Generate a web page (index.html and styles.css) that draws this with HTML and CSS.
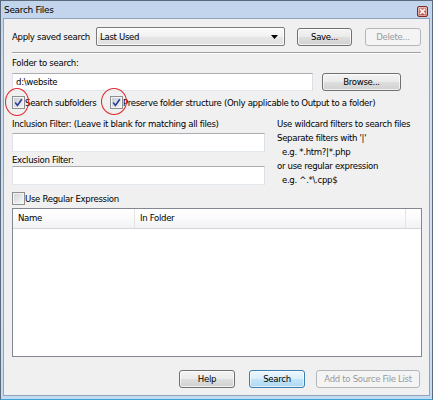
FILE: index.html
```html
<!DOCTYPE html>
<html>
<head>
<meta charset="utf-8">
<title>Search Files</title>
<link rel="stylesheet" href="styles.css">
</head>
<body>
<div class="window">
  <div class="titlebar">
    <span class="title">Search Files</span>
    <span class="close"><svg width="7" height="7" viewBox="0 0 7 7"><path d="M1 1L6 6M6 1L1 6" stroke="#fff" stroke-width="1.6" fill="none"/></svg></span>
  </div>
  <div class="client">
    <div class="row saved">
      <span class="lbl saved-lbl">Apply saved search</span>
      <div class="combo"><span class="combo-text">Last Used</span><svg class="arrow" width="7" height="4" viewBox="0 0 7 4"><path d="M0 0H7L3.5 4Z" fill="#000"/></svg></div>
      <button class="btn save">Save...</button>
      <button class="btn disabled delete">Delete...</button>
    </div>
    <div class="sep"></div>
    <div class="lbl folder-lbl">Folder to search:</div>
    <div class="row folder">
      <div class="input path">d:\website</div>
      <button class="btn browse">Browse...</button>
    </div>
    <div class="checks">
      <label class="check">
        <span class="box"><svg width="11" height="11" viewBox="0 0 11 11"><path d="M2.2 5.6L4.4 8.4L8.8 2.2" stroke="#2c3d92" stroke-width="1.6" fill="none"/></svg><span class="ring ring-a"></span></span>
        <span class="ctext">Search subfolders</span>
      </label>
      <label class="check">
        <span class="box"><svg width="11" height="11" viewBox="0 0 11 11"><path d="M2.2 5.6L4.4 8.4L8.8 2.2" stroke="#2c3d92" stroke-width="1.6" fill="none"/></svg><span class="ring ring-b"></span></span>
        <span class="ctext">Preserve folder structure (Only applicable to Output to a folder)</span>
      </label>
    </div>
    <div class="filters">
      <div class="filter-col">
        <div class="lbl inc-lbl">Inclusion Filter: (Leave it blank for matching all files)</div>
        <div class="input inc"></div>
        <div class="lbl exc-lbl">Exclusion Filter:</div>
        <div class="input exc"></div>
      </div>
      <div class="hints">
        <div>Use wildcard filters to search files</div>
        <div>Separate filters with '|'</div>
        <div class="eg">e.g. *.htm?|*.php</div>
        <div>or use regular expression</div>
        <div class="eg">e.g. ^.*\.cpp$</div>
      </div>
    </div>
    <label class="check regex">
      <span class="box unchecked"></span>
      <span class="ctext">Use Regular Expression</span>
    </label>
    <div class="list">
      <div class="list-head">
        <span class="col col-name">Name</span>
        <span class="col col-folder">In Folder</span>
        <span class="col col-rest"></span>
      </div>
      <div class="list-body"></div>
    </div>
    <div class="actions">
      <button class="btn help">Help</button>
      <button class="btn default search">Search</button>
      <button class="btn disabled add">Add to Source File List</button>
    </div>
  </div>
</div>
</body>
</html>
```

FILE: styles.css
```css
* { box-sizing: border-box; }
html, body { margin: 0; padding: 0; }
body {
  width: 433px;
  height: 400px;
  overflow: hidden;
  font-family: "DejaVu Sans", "Liberation Sans", Arial, sans-serif;
  font-size: 8.6px;
  letter-spacing: -0.33px;
  color: #000;
  background: #fff;
}
.window {
  width: 433px;
  height: 400px;
  display: flex;
  flex-direction: column;
  border: 1px solid #5b6a7d;
  border-bottom-color: #3aa6dc;
  padding: 0 2px 3px 2px;
  background: linear-gradient(#c0d4ec, #cddcf0 60px, #d4e1f2 300px, #c4dbef);
}
.titlebar {
  height: 17px;
  flex: none;
  display: flex;
  align-items: center;
  justify-content: space-between;
  padding-left: 1px;
}
.title { font-size: 9px; line-height: 12px; margin-top: 1px; }
.close {
  width: 11px;
  height: 11px;
  margin-right: 2px;
  margin-top: 3px;
  border: 1px solid #7e2c25;
  border-radius: 2px;
  background: linear-gradient(#d88a82, #c24f44);
  display: flex;
  align-items: center;
  justify-content: center;
  box-shadow: inset 0 0 0 1px rgba(255,255,255,0.45);
}
.client {
  flex: 1;
  display: flex;
  flex-direction: column;
  border: 1px solid #8ea3bd;
  background: #f0f0f0;
  padding: 8px 8px 7px 8px;
  min-height: 0;
}
.lbl { line-height: 12px; white-space: nowrap; }
.row { display: flex; align-items: center; }
.saved { height: 19px; }
.saved-lbl { width: 84px; flex: none; }
.btn {
  font: inherit;
  letter-spacing: inherit;
  color: #000;
  padding: 0;
  margin: 0;
  border: 1px solid #707070;
  border-radius: 3px;
  background: linear-gradient(#f3f3f3 0%, #ebebeb 48%, #dedede 52%, #d0d0d0 100%);
  box-shadow: inset 0 0 0 1px rgba(255,255,255,0.7);
  height: 18px;
  line-height: 16px;
  text-align: center;
  flex: none;
}
.btn.disabled {
  color: #9a9a9a;
  border-color: #b4b7ba;
  background: #f4f4f4;
  box-shadow: none;
}
.btn.default {
  border-color: #3c7fb1;
  background: linear-gradient(#ebf6fd 0%, #dbeffb 48%, #c2e4f8 52%, #afd8f2 100%);
  box-shadow: inset 0 0 0 1px rgba(255,255,255,0.6);
}
.combo {
  width: 189px;
  height: 19px;
  flex: none;
  display: flex;
  align-items: center;
  justify-content: space-between;
  padding: 0 6px 0 3px;
  border: 1px solid #7a7a7a;
  border-radius: 2px;
  background: linear-gradient(#fbfbfb 0%, #f1f1f1 50%, #e6e6e6 51%, #e0e0e0 100%);
  box-shadow: inset 0 0 0 1px rgba(255,255,255,0.8);
  line-height: 12px;
}
.save { width: 55px; margin-left: 12px; }
.delete { width: 56px; margin-left: 13px; }
.sep {
  margin-top: 6px;
  height: 2px;
  border-top: 1px solid #a0a0a0;
  border-bottom: 1px solid #ffffff;
  flex: none;
}
.folder-lbl { margin-top: 3px; }
.folder { margin-top: 4px; height: 18px; }
.input {
  background: #fff;
  border: 1px solid #abadb3;
  border-left-color: #e2e3ea;
  border-right-color: #dbdfe6;
  border-bottom-color: #e3e9ef;
  line-height: 16px;
  padding-left: 3px;
  white-space: nowrap;
}
.path { width: 301px; height: 18px; }
.browse { width: 79px; margin-left: 9px; height: 18px; }
.checks {
  margin-top: 5px;
  display: grid;
  grid-template-columns: 98px auto;
  height: 13px;
  flex: none;
}
.check { display: flex; align-items: center; height: 13px; white-space: nowrap; }
.box {
  position: relative;
  width: 13px;
  height: 13px;
  flex: none;
  border: 1px solid #8e8f8f;
  background: linear-gradient(135deg, #c4c9d3 0%, #dfe2e8 55%, #f7f7f7 100%);
  box-shadow: inset 0 0 0 1px #f4f4f4;
  display: flex;
  align-items: center;
  justify-content: center;
}
.box.unchecked {
  background: linear-gradient(135deg, #cfd2d6 0%, #e6e7e9 55%, #fafafa 100%);
}
.ctext { margin-left: 0; line-height: 12px; }
.ring {
  position: absolute;
  border: 1px solid #e0262b;
  border-radius: 50%;
  pointer-events: none;
}
.ring-a { left: -8px; top: -9px; width: 24px; height: 28px; }
.ring-b { left: -10px; top: -9px; width: 26px; height: 27px; }
.filters {
  margin-top: 8px;
  display: grid;
  grid-template-columns: 253px auto;
  column-gap: 12px;
  flex: none;
}
.filter-col { display: flex; flex-direction: column; }
.inc-lbl { line-height: 14px; }
.inc { margin-top: 2px; height: 19px; }
.exc-lbl { margin-top: 2px; }
.exc { height: 19px; }
.hints { line-height: 14px; white-space: nowrap; }
.hints .eg { padding-left: 5px; }
.regex { margin-top: 5px; flex: none; }
.list {
  margin-top: 3px;
  margin-right: -1px;
  flex: 1;
  border: 1px solid #828790;
  background: #fff;
  display: flex;
  flex-direction: column;
  min-height: 0;
}
.list-head {
  height: 20px;
  display: flex;
  background: linear-gradient(#ffffff 0%, #fbfbfc 45%, #f1f2f4 100%);
  border-bottom: 1px solid #d5d5d5;
  flex: none;
}
.col {
  line-height: 19px;
  padding-left: 5px;
  border-right: 1px solid #e3e4e6;
  white-space: nowrap;
}
.col-name { width: 122px; }
.col-folder { width: 271px; }
.col-rest { flex: 1; border-right: none; }
.list-body { flex: 1; }
.actions {
  margin-top: 13px;
  display: flex;
  justify-content: flex-end;
  padding-right: 1px;
  flex: none;
}
.help { width: 56px; }
.search { width: 56px; margin-left: 14px; }
.add { width: 104px; margin-left: 11px; }
```
